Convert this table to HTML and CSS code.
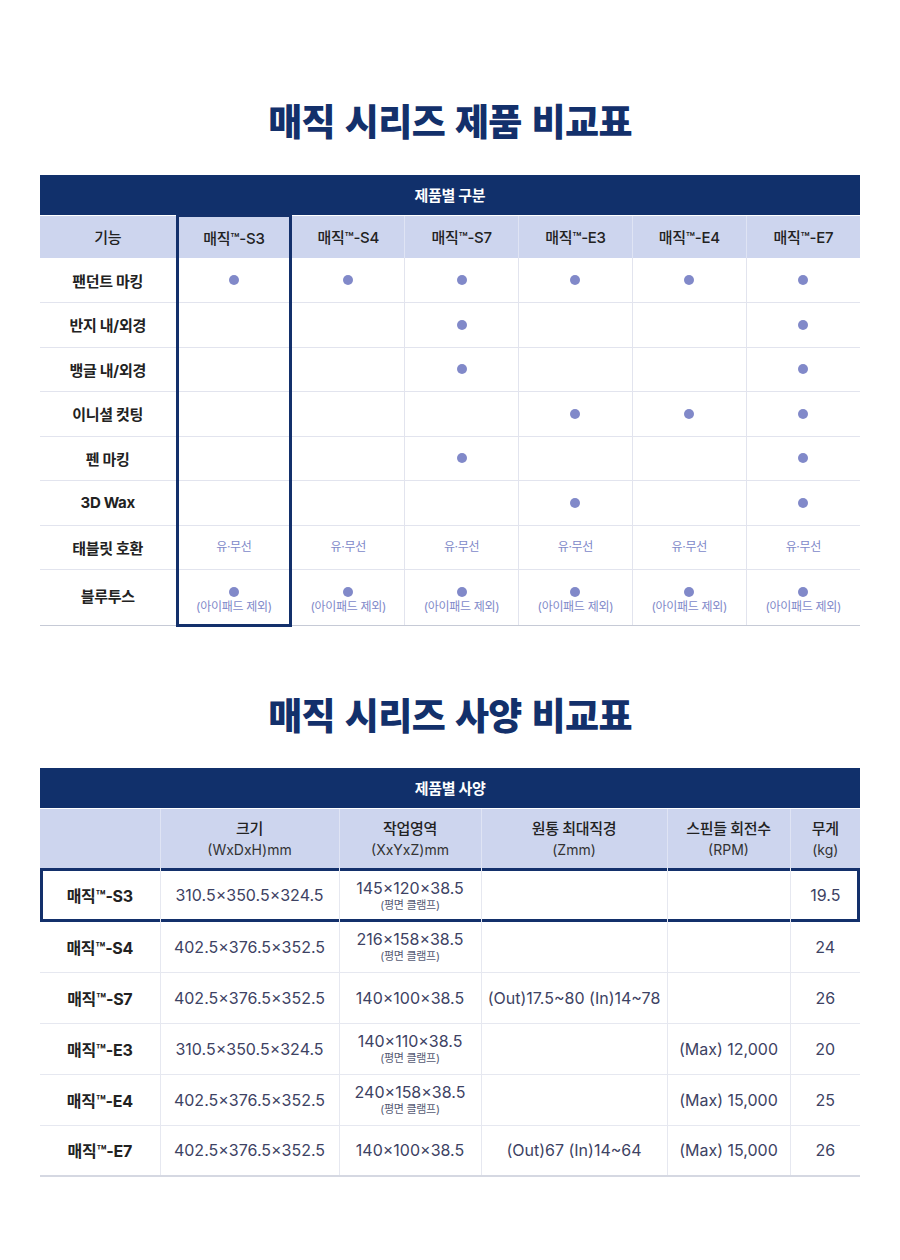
FILE: index.html
```html
<!DOCTYPE html>
<html lang="ko">
<head>
<meta charset="utf-8">
<title>매직 시리즈 비교표</title>
<link rel="stylesheet" href="styles.css">
</head>
<body>
<main class="page">
  <h2 class="title title-first">매직 시리즈 제품 비교표</h2>
  <table class="cmp">
    <colgroup>
      <col class="c-label"><col><col><col><col><col><col>
    </colgroup>
    <thead>
      <tr><th class="bar" colspan="7">제품별 구분</th></tr>
      <tr class="heads">
        <th>기능</th>
        <th class="hl hl-top">매직™-S3</th>
        <th>매직™-S4</th>
        <th>매직™-S7</th>
        <th>매직™-E3</th>
        <th>매직™-E4</th>
        <th>매직™-E7</th>
      </tr>
    </thead>
    <tbody>
      <tr><th>팬던트 마킹</th><td class="hl"><span class="dot"></span></td><td><span class="dot"></span></td><td><span class="dot"></span></td><td><span class="dot"></span></td><td><span class="dot"></span></td><td><span class="dot"></span></td></tr>
      <tr><th>반지 내/외경</th><td class="hl"></td><td></td><td><span class="dot"></span></td><td></td><td></td><td><span class="dot"></span></td></tr>
      <tr><th>뱅글 내/외경</th><td class="hl"></td><td></td><td><span class="dot"></span></td><td></td><td></td><td><span class="dot"></span></td></tr>
      <tr><th>이니셜 컷팅</th><td class="hl"></td><td></td><td></td><td><span class="dot"></span></td><td><span class="dot"></span></td><td><span class="dot"></span></td></tr>
      <tr><th>펜 마킹</th><td class="hl"></td><td></td><td><span class="dot"></span></td><td></td><td></td><td><span class="dot"></span></td></tr>
      <tr><th>3D Wax</th><td class="hl"></td><td></td><td></td><td><span class="dot"></span></td><td></td><td><span class="dot"></span></td></tr>
      <tr class="small-row"><th>태블릿 호환</th><td class="hl"><span class="note">유·무선</span></td><td><span class="note">유·무선</span></td><td><span class="note">유·무선</span></td><td><span class="note">유·무선</span></td><td><span class="note">유·무선</span></td><td><span class="note">유·무선</span></td></tr>
      <tr class="last-row"><th>블루투스</th>
        <td class="hl hl-bottom"><span class="dot"></span><span class="note">(아이패드 제외)</span></td>
        <td><span class="dot"></span><span class="note">(아이패드 제외)</span></td>
        <td><span class="dot"></span><span class="note">(아이패드 제외)</span></td>
        <td><span class="dot"></span><span class="note">(아이패드 제외)</span></td>
        <td><span class="dot"></span><span class="note">(아이패드 제외)</span></td>
        <td><span class="dot"></span><span class="note">(아이패드 제외)</span></td>
      </tr>
    </tbody>
  </table>

  <h2 class="title title-second">매직 시리즈 사양 비교표</h2>
  <table class="spec">
    <colgroup>
      <col class="s1"><col class="s2"><col class="s3"><col class="s4"><col class="s5"><col class="s6">
    </colgroup>
    <thead>
      <tr><th class="bar" colspan="6">제품별 사양</th></tr>
      <tr class="heads">
        <th></th>
        <th>크기<span class="sub">(WxDxH)mm</span></th>
        <th>작업영역<span class="sub">(XxYxZ)mm</span></th>
        <th>원통 최대직경<span class="sub">(Zmm)</span></th>
        <th>스핀들 회전수<span class="sub">(RPM)</span></th>
        <th>무게<span class="sub">(kg)</span></th>
      </tr>
    </thead>
    <tbody>
      <tr class="hl-row"><th>매직™-S3</th><td>310.5×350.5×324.5</td><td><span class="val">145×120×38.5</span><span class="tiny">(평면 클램프)</span></td><td></td><td></td><td>19.5</td></tr>
      <tr class="after-hl"><th>매직™-S4</th><td>402.5×376.5×352.5</td><td><span class="val">216×158×38.5</span><span class="tiny">(평면 클램프)</span></td><td></td><td></td><td>24</td></tr>
      <tr><th>매직™-S7</th><td>402.5×376.5×352.5</td><td>140×100×38.5</td><td>(Out)17.5~80 (In)14~78</td><td></td><td>26</td></tr>
      <tr><th>매직™-E3</th><td>310.5×350.5×324.5</td><td><span class="val">140×110×38.5</span><span class="tiny">(평면 클램프)</span></td><td></td><td>(Max) 12,000</td><td>20</td></tr>
      <tr><th>매직™-E4</th><td>402.5×376.5×352.5</td><td><span class="val">240×158×38.5</span><span class="tiny">(평면 클램프)</span></td><td></td><td>(Max) 15,000</td><td>25</td></tr>
      <tr class="last"><th>매직™-E7</th><td>402.5×376.5×352.5</td><td>140×100×38.5</td><td>(Out)67 (In)14~64</td><td>(Max) 15,000</td><td>26</td></tr>
    </tbody>
  </table>
</main>
</body>
</html>
```

FILE: styles.css
```css
* { box-sizing: border-box; }

html, body {
  margin: 0;
  padding: 0;
  background: #ffffff;
}

body {
  font-family: Inter, "Noto Sans CJK KR", "Noto Sans", sans-serif;
  color: #222222;
  width: 900px;
}

.page {
  padding: 0 40px 60px;
}

.title {
  margin: 0;
  text-align: center;
  font-family: "Noto Sans CJK KR", sans-serif;
  font-weight: 900;
  font-size: 37px;
  line-height: 44px;
  color: #13306b;
  letter-spacing: -0.6px;
}

.title-first {
  padding-top: 98px;
  margin-bottom: 33px;
}

.title-second {
  padding-top: 65px;
  margin-bottom: 32px;
}

table {
  width: 820px;
  border-collapse: collapse;
  table-layout: fixed;
}

th, td {
  padding: 0;
  text-align: center;
  vertical-align: middle;
}

.bar {
  background: #11306b;
  color: #ffffff;
  height: 40px;
  font-size: 15px;
  font-weight: 700;
  letter-spacing: -0.3px;
  border: 0;
}

.heads th {
  background: #cdd5ee;
  color: #222222;
  font-size: 15px;
  font-weight: 500;
  letter-spacing: -0.3px;
  border-left: 1px solid #dfe4f4;
  border-top: 1px solid #ffffff;
}

.heads th:first-child {
  border-left: 0;
}

/* ---------- product comparison ---------- */

.cmp .c-label { width: 137px; }

.cmp .heads th {
  height: 43px;
}

.cmp tbody th,
.cmp tbody td {
  height: 44.5px;
  border-bottom: 1px solid #e2e4ee;
  border-left: 1px solid #e2e4ee;
}

.cmp tbody th {
  border-left: 0;
  font-size: 15px;
  font-weight: 700;
  color: #222222;
  letter-spacing: -0.3px;
}

.cmp tbody tr.last-row th,
.cmp tbody tr.last-row td {
  height: 56px;
  border-bottom: 1px solid #c6cad6;
}

.cmp tbody tr.last-row td {
  padding-top: 17px;
  vertical-align: top;
}

.cmp tbody tr.last-row th {
  padding-bottom: 4px;
}

.dot {
  display: block;
  width: 10px;
  height: 10px;
  margin: 0 auto;
  border-radius: 50%;
  background: #8189c9;
}

.note {
  display: block;
  font-size: 12px;
  line-height: 16px;
  color: #8189c9;
  letter-spacing: -0.3px;
}

.last-row .note {
  margin-top: 2px;
}

.cmp .hl {
  border-left: 3px solid #13306b;
  border-right: 3px solid #13306b;
}

.cmp .hl-top {
  border-top: 3px solid #13306b;
}

.cmp tbody tr.last-row td.hl-bottom {
  border-bottom: 3px solid #13306b;
}

/* ---------- spec comparison ---------- */

.spec .s1 { width: 120px; }
.spec .s2 { width: 179px; }
.spec .s3 { width: 142px; }
.spec .s4 { width: 186px; }
.spec .s5 { width: 123px; }
.spec .s6 { width: 70px; }

.spec .heads th {
  height: 60px;
  line-height: 21px;
  font-size: 15px;
  padding-top: 1px;
}

.spec .sub {
  display: block;
  font-size: 14px;
  font-weight: 400;
  color: #333333;
  letter-spacing: 0;
}

.spec tbody th,
.spec tbody td {
  height: 51px;
  border-bottom: 1px solid #e6e8f0;
  border-left: 1px solid #e6e8f0;
  font-size: 16px;
  color: #3d4263;
}

.spec tbody th {
  border-left: 0;
  font-weight: 700;
  color: #222222;
  letter-spacing: -0.3px;
}

.spec tbody td .val {
  display: block;
  line-height: 19px;
}

.spec .tiny {
  display: block;
  font-size: 11px;
  line-height: 14px;
  color: #555a73;
  letter-spacing: -0.3px;
}

/* highlighted S3 row: drawn with inset shadows so the table edge stays at 40px */
.spec tbody tr.hl-row th,
.spec tbody tr.hl-row td {
  height: 54px;
  border-bottom: 0;
  box-shadow: inset 0 3px 0 #13306b, inset 0 -3px 0 #13306b;
}

.spec tbody tr.hl-row th {
  box-shadow: inset 3px 0 0 #13306b, inset 0 3px 0 #13306b, inset 0 -3px 0 #13306b;
}

.spec tbody tr.hl-row td:last-child {
  box-shadow: inset -3px 0 0 #13306b, inset 0 3px 0 #13306b, inset 0 -3px 0 #13306b;
}

.spec tbody tr.after-hl th,
.spec tbody tr.after-hl td {
  height: 50px;
}

.spec tbody tr.last th,
.spec tbody tr.last td {
  border-bottom: 2px solid #d5d8e2;
}
```
